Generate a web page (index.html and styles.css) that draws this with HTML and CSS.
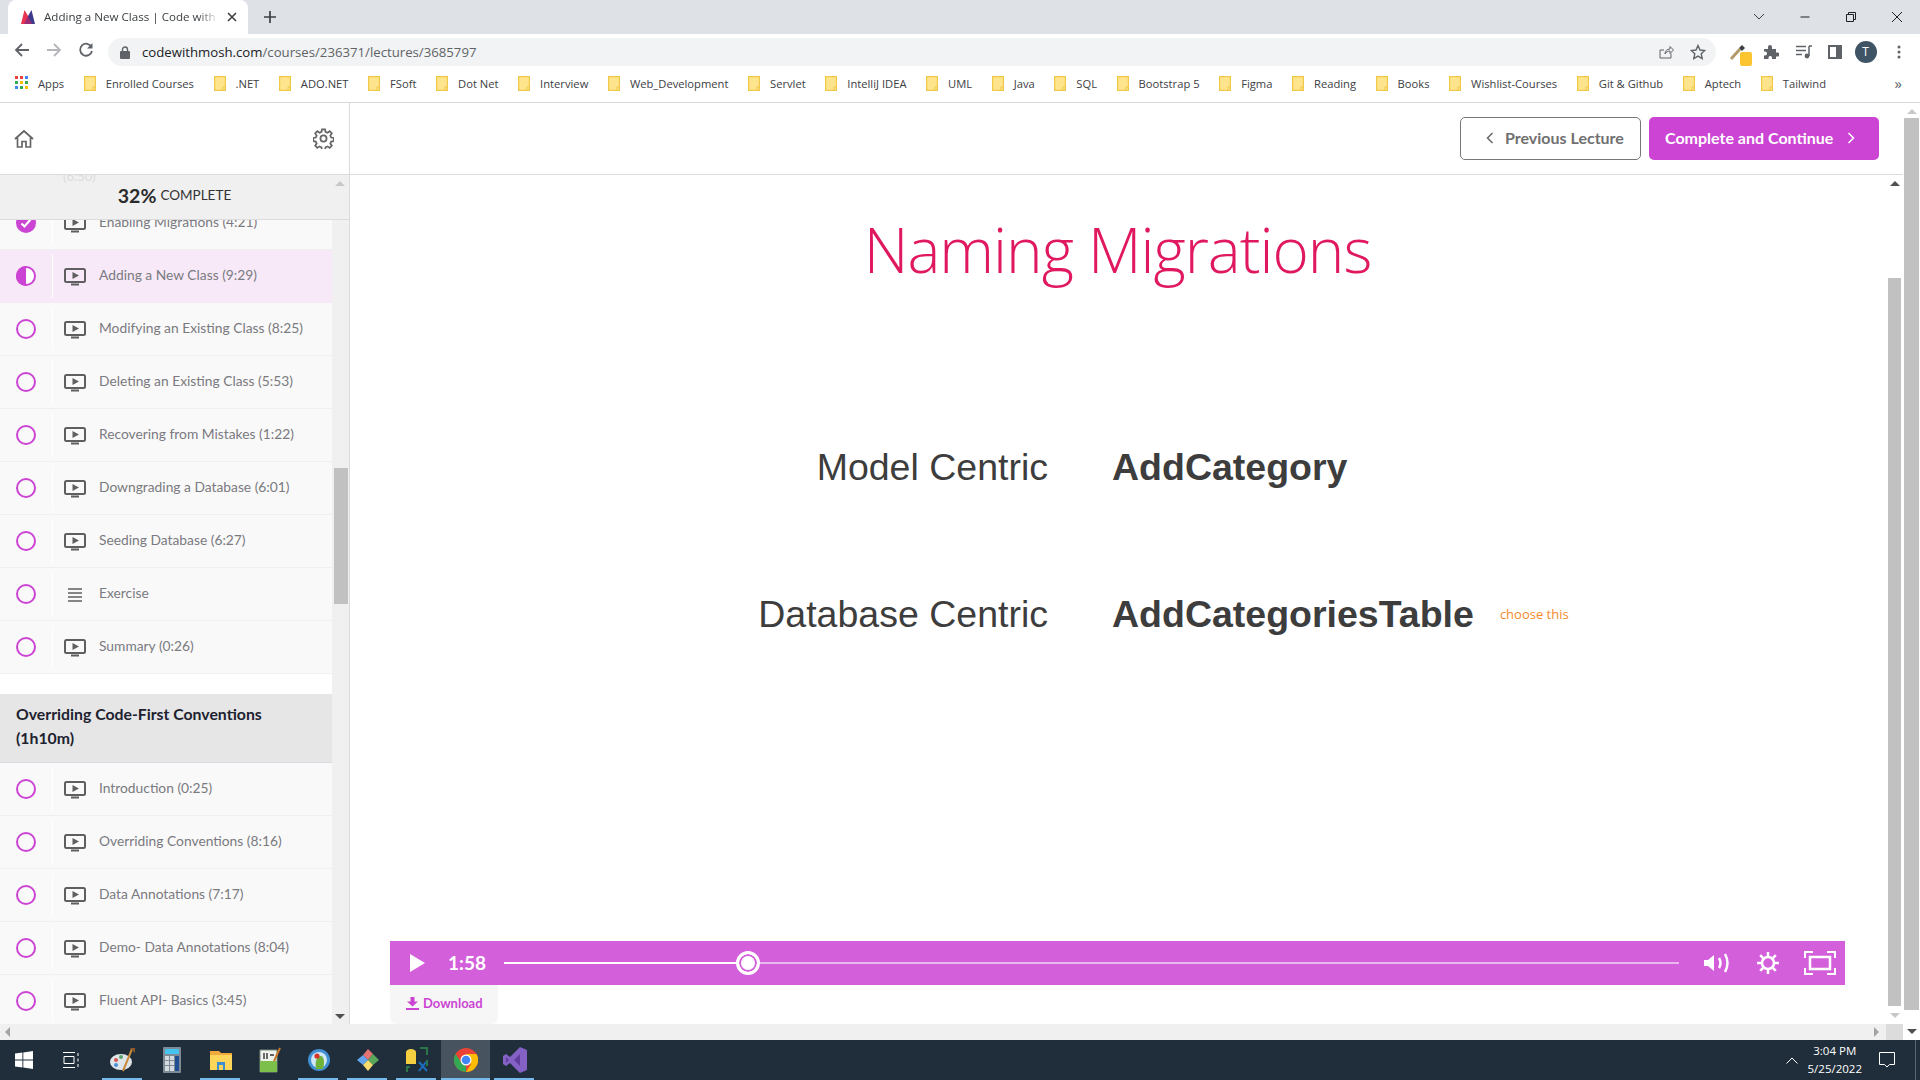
FILE: index.html
```html
<!DOCTYPE html>
<html lang="en">
<head>
    <meta charset="UTF-8">
    <meta name="viewport" content="width=device-width, initial-scale=1.0">
    <title>Adding a New Class | Code with Mosh</title>
    <link rel="stylesheet" href="styles.css">
</head>
<body>
    <svg class="defs" width="0" height="0">
        <symbol id="tv" viewBox="0 0 22 18">
            <rect x="1" y="1" width="20" height="13" rx="1.5" fill="none" stroke="#5f5f5f" stroke-width="2"/>
            <path d="M8.5 4 15 7.5 8.5 11z" fill="#5f5f5f"/>
            <rect x="7" y="15.5" width="8" height="2" fill="#5f5f5f"/>
        </symbol>
        <symbol id="folder" viewBox="0 0 12 15">
            <path d="M.6.6h10.8v13.8H.6z" fill="#ffe48e" stroke="#f0c948" stroke-width="1.2"/>
            <path d="M9 14v-3h2.4" fill="none" stroke="#f0c948"/>
        </symbol>
    </svg>

    <div class="tabstrip">
        <div class="tab">
            <svg class="favicon" width="16" height="16" viewBox="0 0 16 16">
                <path d="M1 15 4.5 1 8 7v8z" fill="#e8344e"/>
                <path d="M15 15 11.5 1 8 7v8z" fill="#3d3a8c"/>
                <path d="M4 15 8 7l4 8z" fill="#9a2b74"/>
            </svg>
            <span class="tab-title">Adding a New Class | Code with Mosh</span>
            <svg class="tab-close" width="10" height="10" viewBox="0 0 10 10"><path d="M1 1l8 8M9 1 1 9" stroke="#3c4043" stroke-width="1.6"/></svg>
        </div>
        <svg class="tab-new" width="14" height="14" viewBox="0 0 14 14"><path d="M7 1v12M1 7h12" stroke="#3c4043" stroke-width="1.7"/></svg>
        <div class="window-controls">
            <svg width="12" height="8" viewBox="0 0 12 8"><path d="M1 1l5 5 5-5" fill="none" stroke="#3c4043"/></svg>
            <svg width="12" height="12" viewBox="0 0 12 12"><path d="M1.5 6h9" stroke="#202124"/></svg>
            <svg width="12" height="12" viewBox="0 0 12 12"><path d="M1.5 3.5h7v7h-7zM3.5 3.5v-2h7v7h-2" fill="none" stroke="#202124"/></svg>
            <svg width="12" height="12" viewBox="0 0 12 12"><path d="M1 1l10 10M11 1 1 11" stroke="#202124"/></svg>
        </div>
    </div>

    <div class="toolbar">
        <svg class="nav-icon" width="16" height="16" viewBox="0 0 16 16"><path d="M15 8H2M8 2 2 8l6 6" fill="none" stroke="#5f6368" stroke-width="1.8"/></svg>
        <svg class="nav-icon" width="16" height="16" viewBox="0 0 16 16"><path d="M1 8h13M8 2l6 6-6 6" fill="none" stroke="#b4b6b9" stroke-width="1.8"/></svg>
        <svg class="nav-icon" width="16" height="16" viewBox="0 0 16 16"><path d="M13.5 5A6 6 0 1 0 14 9" fill="none" stroke="#5f6368" stroke-width="1.8"/><path d="M14.5 1v5.5H9z" fill="#5f6368"/></svg>
        <div class="address">
            <svg width="10" height="13" viewBox="0 0 10 13"><path d="M2.5 6V3.5a2.5 2.5 0 0 1 5 0V6" fill="none" stroke="#5f6368" stroke-width="1.4"/><rect y="5" width="10" height="8" rx="1" fill="#5f6368"/></svg>
            <span class="url"><b>codewithmosh.com</b>/courses/236371/lectures/3685797</span>
            <svg class="address-share" width="16" height="16" viewBox="0 0 16 16"><path d="M13 9.5V14H2V6h4M7 10c0-3 2-5 5-5V2.500L15.500 6 12 9.500V7c-2 0-4 1-5 3z" fill="none" stroke="#5f6368"/></svg>
            <svg width="16" height="16" viewBox="0 0 16 16"><path d="M8 1.5l2 4.500 4.800.5-3.600 3.200 1 4.800L8 12.100l-4.200 2.400 1-4.800L1.200 6.500 6 6z" fill="none" stroke="#5f6368" stroke-width="1.4"/></svg>
        </div>
        <div class="extensions">
            <span class="ext-dropper">
                <svg width="18" height="18" viewBox="0 0 18 18"><path d="M2 16 11 6" stroke="#b39a6a" stroke-width="3"/><path d="M10 5l3-3 3 3-3 3z" fill="#3c4043"/></svg>
                <i class="ext-badge"></i>
            </span>
            <svg width="16" height="16" viewBox="0 0 16 16"><path d="M1 5h4V3a2 2 0 0 1 4 0v2h4v3.5h1.500a2 2 0 0 1 0 4H13V15H9v-1.500a1.800 1.800 0 0 0-3.500 0V15H1v-3.500h1a2 2 0 0 0 0-4H1z" fill="#5f6368"/></svg>
            <svg width="16" height="14" viewBox="0 0 16 14"><path d="M0 1.5h10M0 5.5h10M0 9.5h6" stroke="#5f6368" stroke-width="1.3"/><path d="M13 1v10" stroke="#5f6368" stroke-width="1.5"/><circle cx="11" cy="11" r="2.4" fill="#5f6368"/><path d="M13 1h3" stroke="#5f6368" stroke-width="1.5"/></svg>
            <svg width="14" height="14" viewBox="0 0 14 14"><rect x="1" y="1" width="12" height="12" fill="none" stroke="#5f6368" stroke-width="2"/><rect x="8" y="1" width="5" height="12" fill="#5f6368"/></svg>
            <span class="avatar">T</span>
            <svg width="4" height="14" viewBox="0 0 4 14"><circle cx="2" cy="2" r="1.5" fill="#5f6368"/><circle cx="2" cy="7" r="1.5" fill="#5f6368"/><circle cx="2" cy="12" r="1.5" fill="#5f6368"/></svg>
        </div>
    </div>

    <div class="bookmarks">
        <span class="bookmark bookmark-apps">
            <svg width="14" height="14" viewBox="0 0 14 14">
                <path d="M0 0h3v3H0z" fill="#ea4335"/><path d="M5 0h3v3H5z" fill="#ea4335"/><path d="M10 0h3v3h-3z" fill="#4285f4"/>
                <path d="M0 5h3v3H0z" fill="#34a853"/><path d="M5 5h3v3H5z" fill="#fbbc05"/><path d="M10 5h3v3h-3z" fill="#34a853"/>
                <path d="M0 10h3v3H0z" fill="#4285f4"/><path d="M5 10h3v3H5z" fill="#34a853"/><path d="M10 10h3v3h-3z" fill="#fbbc05"/>
            </svg>
            Apps
        </span>
        <span class="bookmark"><svg width="12" height="15"><use href="#folder"/></svg>Enrolled Courses</span>
        <span class="bookmark"><svg width="12" height="15"><use href="#folder"/></svg>.NET</span>
        <span class="bookmark"><svg width="12" height="15"><use href="#folder"/></svg>ADO.NET</span>
        <span class="bookmark"><svg width="12" height="15"><use href="#folder"/></svg>FSoft</span>
        <span class="bookmark"><svg width="12" height="15"><use href="#folder"/></svg>Dot Net</span>
        <span class="bookmark"><svg width="12" height="15"><use href="#folder"/></svg>Interview</span>
        <span class="bookmark"><svg width="12" height="15"><use href="#folder"/></svg>Web_Development</span>
        <span class="bookmark"><svg width="12" height="15"><use href="#folder"/></svg>Servlet</span>
        <span class="bookmark"><svg width="12" height="15"><use href="#folder"/></svg>IntelliJ IDEA</span>
        <span class="bookmark"><svg width="12" height="15"><use href="#folder"/></svg>UML</span>
        <span class="bookmark"><svg width="12" height="15"><use href="#folder"/></svg>Java</span>
        <span class="bookmark"><svg width="12" height="15"><use href="#folder"/></svg>SQL</span>
        <span class="bookmark"><svg width="12" height="15"><use href="#folder"/></svg>Bootstrap 5</span>
        <span class="bookmark"><svg width="12" height="15"><use href="#folder"/></svg>Figma</span>
        <span class="bookmark"><svg width="12" height="15"><use href="#folder"/></svg>Reading</span>
        <span class="bookmark"><svg width="12" height="15"><use href="#folder"/></svg>Books</span>
        <span class="bookmark"><svg width="12" height="15"><use href="#folder"/></svg>Wishlist-Courses</span>
        <span class="bookmark"><svg width="12" height="15"><use href="#folder"/></svg>Git &amp; Github</span>
        <span class="bookmark"><svg width="12" height="15"><use href="#folder"/></svg>Aptech</span>
        <span class="bookmark"><svg width="12" height="15"><use href="#folder"/></svg>Tailwind</span>
        <span class="bookmark-more">&raquo;</span>
    </div>

    <div class="page">
        <div class="page-main">
            <div class="page-body">
                <aside class="sidebar">
                    <div class="sidebar-head">
                        <svg width="20" height="20" viewBox="0 0 20 20"><path d="M1 10 10 2l9 8M3.5 8.5V18H8v-5.5h4V18h4.5V8.5" fill="none" stroke="#666" stroke-width="1.7"/></svg>
                        <svg width="21" height="21" viewBox="0 0 24 24"><circle cx="12" cy="12" r="3.5" fill="none" stroke="#666" stroke-width="2"/><path d="M10.200 1.500h3.600l.5 2.900 2.300 1 2.400-1.700 2.500 2.500-1.700 2.400 1 2.300 2.900.5v3.600l-2.900.5-1 2.300 1.700 2.400-2.500 2.500-2.400-1.700-2.300 1-.5 2.900h-3.600l-.5-2.900-2.300-1-2.400 1.700-2.500-2.500 1.700-2.400-1-2.300-2.900-.5v-3.600l2.900-.5 1-2.300-1.700-2.400 2.500-2.500 2.400 1.700 2.300-1z" fill="none" stroke="#666" stroke-width="2"/></svg>
                    </div>
                    <div class="progress-strip">
                        <span class="progress-ghost">(6:50)</span>
                        <b>32%</b> COMPLETE
                        <span class="arrow arrow-up arrow-faint list-arrow"></span>
                    </div>
                    <div class="sidebar-body">
                        <div class="course-list">
                            <div class="lecture-row first-row">
                                <div class="status"><svg width="20" height="20" viewBox="0 0 20 20"><circle cx="10" cy="10" r="10" fill="#cc44d4"/><path d="M5.5 10.5l3 3 6-7" fill="none" stroke="#fff" stroke-width="2.2"/></svg></div>
                                <svg class="tv" width="22" height="18"><use href="#tv"/></svg>
                                <span>Enabling Migrations (4:21)</span>
                            </div>
                            <div class="lecture-row current">
                                <div class="status"><svg width="20" height="20" viewBox="0 0 20 20"><circle cx="10" cy="10" r="9" fill="#fff" stroke="#cc44d4" stroke-width="2"/><path d="M10 0a10 10 0 0 0 0 20z" fill="#cc44d4"/></svg></div>
                                <svg class="tv" width="22" height="18"><use href="#tv"/></svg>
                                <span>Adding a New Class (9:29)</span>
                            </div>
                            <div class="lecture-row"><div class="status"><i class="ring"></i></div><svg class="tv" width="22" height="18"><use href="#tv"/></svg><span>Modifying an Existing Class (8:25)</span></div>
                            <div class="lecture-row"><div class="status"><i class="ring"></i></div><svg class="tv" width="22" height="18"><use href="#tv"/></svg><span>Deleting an Existing Class (5:53)</span></div>
                            <div class="lecture-row"><div class="status"><i class="ring"></i></div><svg class="tv" width="22" height="18"><use href="#tv"/></svg><span>Recovering from Mistakes (1:22)</span></div>
                            <div class="lecture-row"><div class="status"><i class="ring"></i></div><svg class="tv" width="22" height="18"><use href="#tv"/></svg><span>Downgrading a Database (6:01)</span></div>
                            <div class="lecture-row"><div class="status"><i class="ring"></i></div><svg class="tv" width="22" height="18"><use href="#tv"/></svg><span>Seeding Database (6:27)</span></div>
                            <div class="lecture-row">
                                <div class="status"><i class="ring"></i></div>
                                <svg class="tv" width="22" height="18" viewBox="0 0 22 18"><path d="M4 3h14M4 7h14M4 11h14M4 15h14" stroke="#5f5f5f" stroke-width="1.6"/></svg>
                                <span>Exercise</span>
                            </div>
                            <div class="lecture-row"><div class="status"><i class="ring"></i></div><svg class="tv" width="22" height="18"><use href="#tv"/></svg><span>Summary (0:26)</span></div>

                            <h3 class="section-title">Overriding Code-First Conventions (1h10m)</h3>

                            <div class="lecture-row"><div class="status"><i class="ring"></i></div><svg class="tv" width="22" height="18"><use href="#tv"/></svg><span>Introduction (0:25)</span></div>
                            <div class="lecture-row"><div class="status"><i class="ring"></i></div><svg class="tv" width="22" height="18"><use href="#tv"/></svg><span>Overriding Conventions (8:16)</span></div>
                            <div class="lecture-row"><div class="status"><i class="ring"></i></div><svg class="tv" width="22" height="18"><use href="#tv"/></svg><span>Data Annotations (7:17)</span></div>
                            <div class="lecture-row"><div class="status"><i class="ring"></i></div><svg class="tv" width="22" height="18"><use href="#tv"/></svg><span>Demo- Data Annotations (8:04)</span></div>
                            <div class="lecture-row"><div class="status"><i class="ring"></i></div><svg class="tv" width="22" height="18"><use href="#tv"/></svg><span>Fluent API- Basics (3:45)</span></div>
                        </div>
                        <div class="list-scrollbar">
                            <div class="list-thumb"></div>
                            <span class="arrow arrow-down arrow-dark"></span>
                        </div>
                    </div>
                </aside>

                <main class="main">
                    <div class="main-top">
                        <a class="btn btn-prev" href="#">
                            <svg width="8" height="12" viewBox="0 0 8 12"><path d="M6.5 1 1.5 6l5 5" fill="none" stroke="#666" stroke-width="1.5"/></svg>
                            Previous Lecture
                        </a>
                        <a class="btn btn-next" href="#">
                            Complete and Continue
                            <svg width="8" height="12" viewBox="0 0 8 12"><path d="M1.5 1l5 5-5 5" fill="none" stroke="#fff" stroke-width="1.5"/></svg>
                        </a>
                    </div>
                    <div class="main-view">
                        <div class="lecture">
                            <div class="slide">
                                <h1 class="slide-title">Naming Migrations</h1>
                                <div class="slide-row slide-row-first">
                                    <span class="slide-label">Model Centric</span>
                                    <strong class="slide-name">AddCategory</strong>
                                </div>
                                <div class="slide-row">
                                    <span class="slide-label">Database Centric</span>
                                    <strong class="slide-name">AddCategoriesTable</strong>
                                    <span class="slide-note">choose this</span>
                                </div>
                            </div>
                            <div class="player">
                                <svg width="15" height="18" viewBox="0 0 15 18"><path d="M0 0 15 9 0 18z" fill="#fff"/></svg>
                                <span class="player-time">1:58</span>
                                <div class="player-track">
                                    <div class="player-fill"></div>
                                    <div class="player-knob"></div>
                                </div>
                                <svg width="28" height="24" viewBox="0 0 28 24"><path d="M1 9h4l6-5v16l-6-5H1z" fill="#fff"/><path d="M16 7q3 5 0 10M22 3q5 9 0 18" fill="none" stroke="#fff" stroke-width="2.5"/></svg>
                                <svg width="24" height="24" viewBox="0 0 24 24"><circle cx="12" cy="12" r="6" fill="none" stroke="#fff" stroke-width="2.5"/><path d="M12 1v4M12 19v4M1 12h4M19 12h4M4.200 4.200l2.800 2.800M17 17l2.800 2.800M19.800 4.200 17 7M7 17l-2.800 2.800" stroke="#fff" stroke-width="2.5"/></svg>
                                <svg width="32" height="24" viewBox="0 0 32 24"><path d="M1 7V1h8M23 1h8v6M31 17v6h-8M9 23H1v-6" fill="none" stroke="#fff" stroke-width="2"/><rect x="6" y="6" width="20" height="12" fill="none" stroke="#fff" stroke-width="2.5"/></svg>
                            </div>
                            <a class="download" href="#">
                                <svg width="13" height="13" viewBox="0 0 13 13"><path d="M4.5 0h4v4.5H12L6.5 9.500 1 4.500h3.500zM0 11h13v2H0z" fill="#cc44d4"/></svg>
                                Download
                            </a>
                        </div>
                        <div class="inner-scrollbar">
                            <span class="arrow arrow-up arrow-dark"></span>
                            <div class="inner-thumb"></div>
                            <span class="arrow arrow-down arrow-faint"></span>
                        </div>
                    </div>
                </main>
            </div>
            <div class="hscroll">
                <span class="arrow arrow-left"></span>
                <span class="arrow arrow-right"></span>
                <div class="hscroll-corner"></div>
            </div>
        </div>
        <div class="outer-scrollbar">
            <span class="arrow arrow-up arrow-faint"></span>
            <div class="outer-thumb"></div>
            <span class="arrow arrow-down arrow-dark"></span>
        </div>
    </div>

    <footer class="taskbar">
        <div class="task-icons">
            <span class="task task-start"><svg width="18" height="18" viewBox="0 0 18 18"><path d="M0 2.600 7.400 1.500v7H0zM8.300 1.400 18 0v8.500H8.300zM0 9.500h7.400v7L0 15.400zM8.300 9.500H18V18l-9.700-1.400z" fill="#fff"/></svg></span>
            <span class="task task-view"><svg width="16" height="16" viewBox="0 0 16 16"><path d="M0 .5h12M0 15.500h12M1 4.500h10v7H1zM15 1v3M15 6.500v3M15 12v3" fill="none" stroke="#fff"/></svg></span>
            <span class="task task-open"><svg width="26" height="26" viewBox="0 0 26 26"><ellipse cx="11" cy="15" rx="11" ry="8" fill="#dfe6ea"/><circle cx="6" cy="13" r="2" fill="#d9534f"/><circle cx="11" cy="10" r="2" fill="#5aa469"/><circle cx="6" cy="18" r="2" fill="#4a90d9"/><path d="M22 2 13 24" stroke="#c98a3c" stroke-width="2"/><path d="M20 1h5v5z" fill="#8a5a2b"/></svg></span>
            <span class="task"><svg width="18" height="26" viewBox="0 0 18 26"><rect width="18" height="26" rx="1" fill="#7d8a96"/><rect x="2" y="2" width="14" height="5" fill="#44c4ee"/><path d="M2 9h4v4H2zM7 9h4v4H7zM2 14h4v4H2zM7 14h4v4H7zM2 19h4v5H2zM7 19h4v5H7z" fill="#d3dbe0"/><path d="M12 9h4v15h-4z" fill="#1d4f91"/></svg></span>
            <span class="task task-open"><svg width="22" height="20" viewBox="0 0 22 20"><path d="M0 1h9l2 2h11v4H0z" fill="#f2a93b"/><path d="M0 5h22v15H0z" fill="#ffd65a"/><path d="M7 12h8v8H7z" fill="#3d8ed0"/><path d="M9 15h4v5H9z" fill="#ffd65a"/></svg></span>
            <span class="task"><svg width="22" height="26" viewBox="0 0 22 26"><path d="M1 3h17v22H1z" fill="#eef3ee" stroke="#7a8a7a"/><path d="M1 14h17v11H1z" fill="#7cc04b"/><path d="M5 6v6M8 6v6M11 8h4" stroke="#333" stroke-width="1.4"/><path d="M21 1 15 14" stroke="#c9792b" stroke-width="2"/></svg></span>
            <span class="task task-open"><svg width="22" height="22" viewBox="0 0 22 22"><circle cx="11" cy="11" r="11" fill="#3f8fd2"/><circle cx="11" cy="11" r="8" fill="#cfe6f5"/><path d="M8 20c-1-6 0-12 4-13s5 6 3 13z" fill="#6fb23a"/><circle cx="9" cy="7" r="2.6" fill="#d8332b"/></svg></span>
            <span class="task task-open"><svg width="24" height="24" viewBox="0 0 24 24"><path d="M12 12 7 7l5-6 5 5z" fill="#e57373"/><path d="M12 12 7 7l-6 5 6 5z" fill="#64a4ec"/><path d="M12 12l5-6 6 6-6 5z" fill="#5aa65a"/><path d="M12 12l-5 5 5 6 5-6z" fill="#f7dc6f"/></svg></span>
            <span class="task task-open"><svg width="24" height="26" viewBox="0 0 24 26"><path d="M1 5a5 3 0 0 1 10 0v12H1z" fill="#f5cf3f"/><path d="M15 1h7v7M2 25v-5h3M22 13v6" fill="none" stroke="#2f8f4e" stroke-width="1.5"/><path d="M14 15l8 9M21 15l-7 9" stroke="#1c6fc0" stroke-width="2"/></svg></span>
            <span class="task task-active"><svg width="24" height="24" viewBox="0 0 24 24"><circle cx="12" cy="12" r="12" fill="#ea4335"/><path d="M12 24a12 12 0 0 1-10.400-18L7 14l5 4z" fill="#34a853"/><path d="M12 6h10.500A12 12 0 0 1 12 24l5-8z" fill="#fbbc05"/><circle cx="12" cy="12" r="5.5" fill="#fff"/><circle cx="12" cy="12" r="4.3" fill="#4285f4"/></svg></span>
            <span class="task task-open"><svg width="24" height="26" viewBox="0 0 24 26"><path d="M17 0l7 3v20l-7 3L7 16l-4 3-3-2V9l3-2 4 3z" fill="#8661c5"/><path d="M17 7v12l-6-6z" fill="#5f3e9e"/><path d="M3 10v6l3-3z" fill="#5f3e9e"/></svg></span>
        </div>
        <div class="tray">
            <svg width="12" height="7" viewBox="0 0 12 7"><path d="M.5 6.500 6 1l5.500 5.500" fill="none" stroke="#fff"/></svg>
            <div class="clock"><span>3:04 PM</span><span>5/25/2022</span></div>
            <svg width="16" height="16" viewBox="0 0 16 16"><path d="M.5.500h15v12h-5L8 15l-2.500-2.500h-5z" fill="none" stroke="#fff"/></svg>
            <i class="show-desktop"></i>
        </div>
    </footer>
</body>
</html>
```

FILE: styles.css
```css
* {
    box-sizing: border-box;
}
html, body {
    height: 100%;
}
body {
    margin: 0;
    display: flex;
    flex-direction: column;
    height: 100vh;
    overflow: hidden;
    font-family: "Lato", "Open Sans", sans-serif;
    background-color: #fff;
}
.defs {
    position: absolute;
}
a {
    text-decoration: none;
}

/* browser chrome */
.tabstrip {
    height: 34px;
    flex: none;
    display: flex;
    align-items: flex-end;
    padding-left: 8px;
    background-color: #dee1e6;
}
.tab {
    width: 240px;
    height: 34px;
    display: flex;
    align-items: center;
    padding: 0 11px 0 12px;
    background-color: #fff;
    border-radius: 8px 8px 0 0;
}
.favicon {
    flex: none;
    margin-right: 8px;
}
.tab-title {
    flex: 1;
    margin-top: -2px;
    overflow: hidden;
    white-space: nowrap;
    font-family: "Open Sans", sans-serif;
    font-size: 11.6px;
    color: #3c4043;
    -webkit-mask-image: linear-gradient(to right, #000 88%, transparent);
    mask-image: linear-gradient(to right, #000 88%, transparent);
}
.tab-close {
    flex: none;
    margin-left: 8px;
}
.tab-new {
    margin: 0 0 10px 15px;
}
.window-controls {
    margin-left: auto;
    height: 34px;
    display: flex;
    align-items: center;
    gap: 34px;
    padding-right: 17px;
}
.toolbar {
    height: 32px;
    flex: none;
    display: flex;
    align-items: center;
    padding-left: 14px;
    background-color: #fff;
}
.nav-icon {
    margin-right: 16px;
}
.toolbar .nav-icon:nth-child(3) {
    margin-right: 14px;
}
.address {
    width: 1608px;
    height: 28px;
    margin-top: 4px;
    display: flex;
    align-items: center;
    gap: 12px;
    padding: 0 10px 0 12px;
    border-radius: 14px;
    background-color: #f1f3f4;
}
.url {
    flex: 1;
    font-family: "Open Sans", sans-serif;
    font-size: 13.2px;
    color: #5f6368;
}
.url b {
    font-weight: 400;
    color: #202124;
}
.address-share {
    margin-right: 4px;
}
.extensions {
    flex: 1;
    display: flex;
    align-items: center;
    justify-content: space-between;
    margin-top: 4px;
    padding: 0 19px 0 13px;
}
.ext-dropper {
    position: relative;
    display: flex;
}
.ext-badge {
    position: absolute;
    right: -5px;
    bottom: -5px;
    width: 12px;
    height: 14px;
    border-radius: 2px;
    background-color: #fbc531;
}
.avatar {
    width: 22px;
    height: 22px;
    margin: 0 4px 0 -4px;
    border-radius: 50%;
    background-color: #3f5566;
    color: #fff;
    font-family: "Open Sans", sans-serif;
    font-size: 12px;
    line-height: 22px;
    text-align: center;
}
.bookmarks {
    height: 37px;
    flex: none;
    display: flex;
    align-items: center;
    gap: 19.6px;
    padding: 0 0 2px 15px;
    background-color: #fff;
    border-bottom: 1px solid #d8d8d8;
    font-family: "Open Sans", sans-serif;
    font-size: 11.2px;
    color: #3c4043;
}
.bookmark {
    display: flex;
    align-items: center;
    gap: 10px;
    white-space: nowrap;
}
.bookmark-apps {
    gap: 9px;
}
.bookmark-more {
    margin-left: auto;
    margin-right: 18px;
    font-size: 15px;
    color: #5f6368;
}

/* page frame */
.page {
    flex: 1;
    min-height: 0;
    display: flex;
}
.page-main {
    flex: 1;
    min-width: 0;
    display: flex;
    flex-direction: column;
}
.page-body {
    flex: 1;
    min-height: 0;
    display: flex;
}
.hscroll {
    height: 16px;
    flex: none;
    display: flex;
    align-items: center;
    justify-content: space-between;
    padding-left: 5px;
    background-color: #f0f0f0;
}
.hscroll-corner {
    width: 17px;
    height: 16px;
    margin-left: 7px;
    background-color: #dcdcdc;
}
.hscroll .arrow-right {
    margin-left: auto;
}
.outer-scrollbar {
    width: 17px;
    flex: none;
    display: flex;
    flex-direction: column;
    align-items: center;
    padding: 6px 0 6px;
    background-color: #fff;
}
.outer-thumb {
    width: 15px;
    height: 892px;
    margin: 4px 0 auto;
    background-color: #c1c1c1;
}
.arrow {
    display: block;
    width: 0;
    height: 0;
    flex: none;
    border: 5px solid transparent;
}
.arrow-up {
    border-top: 0;
    border-bottom: 5px solid #a3a3a3;
}
.arrow-down {
    border-bottom: 0;
    border-top: 5px solid #a3a3a3;
}
.arrow-left {
    border-left: 0;
    border-right: 5px solid #a3a3a3;
}
.arrow-right {
    border-right: 0;
    border-left: 5px solid #a3a3a3;
}
.arrow-up.arrow-dark {
    border-bottom-color: #505050;
}
.arrow-down.arrow-dark {
    border-top-color: #505050;
}
.arrow-up.arrow-faint {
    border-bottom-color: #c8c8c8;
}
.arrow-down.arrow-faint {
    border-top-color: #c8c8c8;
}

/* sidebar */
.sidebar {
    width: 350px;
    flex: none;
    display: flex;
    flex-direction: column;
    border-right: 1px solid #dcdcdc;
}
.sidebar-head {
    height: 72px;
    flex: none;
    display: flex;
    align-items: center;
    justify-content: space-between;
    padding: 0 15px 0 14px;
    border-bottom: 1px solid #dcdcdc;
}
.progress-strip {
    position: relative;
    height: 45px;
    flex: none;
    display: flex;
    align-items: center;
    justify-content: center;
    gap: 4px;
    padding-bottom: 4px;
    overflow: hidden;
    background-color: #f0f0f0;
    border-bottom: 1px solid #dcdcdc;
    font-size: 13.5px;
    color: #333;
}
.progress-strip b {
    font-size: 19.5px;
    color: #2b2b2b;
}
.progress-ghost {
    position: absolute;
    left: 63px;
    top: -7px;
    font-size: 13px;
    color: #dcdcdc;
}
.list-arrow {
    position: absolute;
    top: 6px;
    right: 4px;
}
.sidebar-body {
    flex: 1;
    min-height: 0;
    display: flex;
}
.course-list {
    width: 332px;
    flex: none;
    overflow: hidden;
    background-color: #fff;
}
.list-scrollbar {
    flex: 1;
    position: relative;
    background-color: #f0f0f0;
}
.list-thumb {
    width: 14px;
    height: 136px;
    margin: 248px 0 0 2px;
    background-color: #c1c1c1;
}
.list-scrollbar .arrow {
    position: absolute;
    bottom: 5px;
    left: 3px;
}
.lecture-row {
    height: 53px;
    display: flex;
    align-items: center;
    background-color: #f9f9f9;
    border-bottom: 1px solid #f0f0f0;
    font-size: 13.8px;
    color: #7a7a80;
}
.lecture-row span {
    margin-top: -3px;
}
.first-row {
    margin-top: -23px;
}
.current {
    background-color: #f7e9f8;
    border-bottom-color: #f7e9f8;
}
.status {
    width: 53px;
    height: 44px;
    flex: none;
    display: flex;
    align-items: center;
    padding-left: 16px;
    border-right: 1px solid #fff;
}
.ring {
    display: block;
    width: 20px;
    height: 20px;
    border: 2px solid #cc44d4;
    border-radius: 50%;
}
.tv {
    flex: none;
    margin: 2px 13px 0 11px;
}
.section-title {
    height: 69px;
    margin: 20px 0 0;
    padding: 8px 40px 0 16px;
    background-color: #e6e6e6;
    border-bottom: 1px solid #e0d8e2;
    font-size: 15.8px;
    font-weight: 700;
    line-height: 24px;
    color: #20222f;
}

/* main column */
.main {
    flex: 1;
    min-width: 0;
    display: flex;
    flex-direction: column;
}
.main-top {
    height: 72px;
    flex: none;
    display: flex;
    align-items: center;
    justify-content: flex-end;
    gap: 8px;
    padding: 0 24px 0 0;
    border-bottom: 1px solid #dcdcdc;
}
.btn {
    height: 43px;
    display: flex;
    align-items: center;
    padding-bottom: 2px;
    font-size: 16px;
    font-weight: 700;
    border-radius: 5px;
}
.btn-prev {
    width: 181px;
    gap: 11px;
    padding-left: 25px;
    border: 1px solid #777;
    color: #707070;
}
.btn-next {
    width: 230px;
    gap: 14px;
    padding-left: 16px;
    background-color: #cc44d4;
    color: #fff;
}
.main-view {
    flex: 1;
    min-height: 0;
    display: flex;
}
.lecture {
    flex: 1;
    min-width: 0;
    display: flex;
    flex-direction: column;
    padding: 0 41px 0 40px;
}
.slide {
    flex: 1;
    min-height: 0;
    padding-top: 34px;
    color: #3d3d3d;
}
.slide-title {
    margin: 0;
    font-family: "Open Sans", sans-serif;
    font-size: 62px;
    font-weight: 300;
    line-height: 80px;
    letter-spacing: -1px;
    text-align: center;
    color: #e0185f;
}
.slide-row {
    display: flex;
    align-items: center;
    height: 60px;
    margin-top: 87px;
    font-family: "Liberation Sans", Arial, sans-serif;
    font-size: 37.5px;
}
.slide-row-first {
    margin-top: 148px;
}
.slide-label {
    width: 658px;
    flex: none;
    text-align: right;
}
.slide-name {
    margin-left: 64px;
}
.slide-note {
    margin-left: 26px;
    font-family: "Open Sans", sans-serif;
    font-size: 13px;
    color: #f58a2c;
}
.player {
    height: 44px;
    flex: none;
    display: flex;
    align-items: center;
    padding: 0 8px 0 20px;
    background-color: #d35fdb;
}
.player-time {
    margin: -2px 18px 0 23px;
    font-size: 19px;
    font-weight: 700;
    color: #fff;
}
.player-track {
    position: relative;
    width: 1175px;
    height: 2px;
    margin-right: 24px;
    background-color: rgba(255, 255, 255, 0.55);
}
.player-fill {
    width: 244px;
    height: 100%;
    background-color: #fff;
}
.player-knob {
    position: absolute;
    left: 232px;
    top: -11px;
    width: 24px;
    height: 24px;
    border: 3px solid #fff;
    border-radius: 50%;
    background-color: #fff;
    box-shadow: inset 0 0 0 2px #d35fdb;
}
.player svg:nth-of-type(3) {
    margin-left: 25px;
}
.player svg:nth-of-type(4) {
    margin-left: 24px;
}
.download {
    width: 108px;
    height: 39px;
    flex: none;
    display: flex;
    align-items: center;
    gap: 4px;
    padding: 0 0 3px 16px;
    border-radius: 0 0 6px 6px;
    background-color: #f6f6f6;
    font-size: 13px;
    font-weight: 700;
    color: #cc44d4;
}
.inner-scrollbar {
    width: 17px;
    flex: none;
    display: flex;
    flex-direction: column;
    align-items: center;
    padding: 6px 0 6px;
}
.inner-thumb {
    width: 13px;
    height: 728px;
    margin: auto 0 0;
    background-color: #c1c1c1;
}
.inner-scrollbar .arrow-down {
    margin-top: 7px;
}

/* windows taskbar */
.taskbar {
    height: 40px;
    flex: none;
    display: flex;
    align-items: stretch;
    justify-content: space-between;
    background-color: #1f2e3a;
    font-family: "Open Sans", sans-serif;
    color: #fff;
}
.task-icons {
    display: flex;
}
.task {
    position: relative;
    width: 49px;
    display: flex;
    align-items: center;
    justify-content: center;
}
.task-start svg {
    margin-right: 1px;
}
.task-view svg {
    margin-right: 5px;
}
.task-open::after, .task-active::after {
    content: "";
    position: absolute;
    left: 4px;
    right: 5px;
    bottom: 0;
    height: 2px;
    background-color: #76b9ed;
}
.task-active {
    background-color: #47545f;
}
.task-active::after {
    left: 0;
    right: 0;
}
.tray {
    display: flex;
    align-items: center;
}
.clock {
    display: flex;
    flex-direction: column;
    align-items: center;
    margin: 0 17px 0 10px;
    font-size: 11.5px;
    line-height: 18px;
}
.show-desktop {
    width: 5px;
    height: 40px;
    margin-left: 20px;
    border-left: 1px solid #5a6670;
}
```
